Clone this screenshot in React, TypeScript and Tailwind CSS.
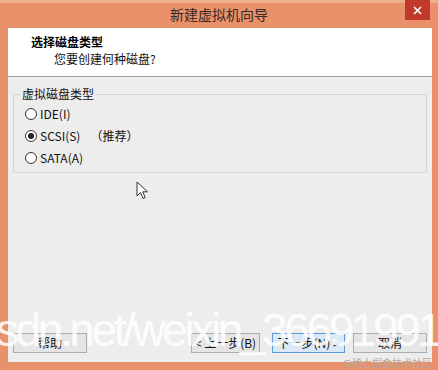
import React from "react";

const font = { fontFamily: '"Noto Sans CJK SC", "Liberation Sans", sans-serif' };

function Radio({ label, checked, extra }: { label: string; checked?: boolean; extra?: string }) {
  return (
    <div className="flex items-center h-[22px] text-[12px] text-[#111]">
      <span className="w-[12px] h-[12px] rounded-full border border-[#333] bg-white flex items-center justify-center">
        {checked && <span className="w-[6px] h-[6px] rounded-full bg-[#222]" />}
      </span>
      <span className="ml-[3px]">{label}</span>
      {extra && <span className="ml-[10px]">{extra}</span>}
    </div>
  );
}

function WinButton({ children, primary }: { children: React.ReactNode; primary?: boolean }) {
  return (
    <div
      className={`h-[20px] flex items-center justify-center text-[12px] text-[#111] border ${
        primary ? "border-[#5a9ad8] bg-[#dbe8f5]" : "border-[#adadad] bg-[#e5e5e5]"
      }`}
    >
      {children}
    </div>
  );
}

export default function App() {
  return (
    <div className="relative w-[438px] h-[370px] overflow-hidden bg-[#e8916a] flex flex-col" style={font}>
      {/* title bar */}
      <div className="relative h-[28px] flex items-center justify-center border-t-[3px] border-[#efae8c]">
        <span className="text-[14px] text-[#3a2a22] -mt-[3px]">新建虚拟机向导</span>
        <div className="absolute right-[8px] -top-[3px] w-[25px] h-[20px] bg-[#c0392b] flex items-center justify-center">
          <svg width="9" height="9" viewBox="0 0 9 9">
            <path d="M1 1L8 8M8 1L1 8" stroke="white" strokeWidth="1.6" />
          </svg>
        </div>
      </div>

      <div className="flex-1 ml-[8px] mr-[6px] mb-[8px] flex flex-col">
        {/* header */}
        <div className="h-[49px] bg-white border-b border-[#a0a0a0] pl-[23px] pt-[5px]">
          <div className="text-[12px] font-bold text-[#000] leading-[18px]">选择磁盘类型</div>
          <div className="text-[12px] text-[#111] leading-[16px] pl-[23px]">您要创建何种磁盘?</div>
        </div>

        {/* body */}
        <div className="flex-1 bg-[#ededed] flex flex-col px-[5px] pt-[8px] pb-[9px]">
          <fieldset className="border border-[#d4d4d4] rounded-[2px] pl-[11px] pr-[8px] pb-[3px] h-[88px]">
            <legend className="text-[12px] text-[#111] px-[2px] ml-[-5px]">虚拟磁盘类型</legend>
            <div className="flex flex-col">
              <Radio label="IDE(I)" />
              <Radio label="SCSI(S)" checked extra="（推荐）" />
              <Radio label="SATA(A)" />
            </div>
          </fieldset>

          <div className="flex-1 relative">
            <svg className="absolute left-[123px] top-[8px]" width="13" height="19" viewBox="0 0 13 19">
              <path d="M1 1V15L4.5 11.5L7 17.5L9.2 16.6L6.8 10.8H11.5Z" fill="white" stroke="#333" strokeWidth="1" />
            </svg>
          </div>

          <div className="flex items-center">
            <div className="w-[74px]">
              <WinButton>帮助</WinButton>
            </div>
            <div className="flex-1" />
            <div className="w-[69px]">
              <WinButton>&lt; 上一步(B)</WinButton>
            </div>
            <div className="w-[73px] ml-[12px]">
              <WinButton primary>下一步(N) &gt;</WinButton>
            </div>
            <div className="w-[74px] ml-[8px]">
              <WinButton>取消</WinButton>
            </div>
          </div>
        </div>
      </div>

      {/* watermarks */}
      <div
        className="absolute left-[-4px] top-[302px] text-[46px] leading-[56px] tracking-[-3.4px] text-white/85 whitespace-nowrap pointer-events-none"
        style={{ fontFamily: '"Liberation Sans", sans-serif' }}
      >
        sdn.net/weixin_36691991
      </div>
      <div className="absolute right-[6px] bottom-[1px] text-[10px] leading-[12px] text-[#b9a59a]">@稀土掘金技术社区</div>
    </div>
  );
}
